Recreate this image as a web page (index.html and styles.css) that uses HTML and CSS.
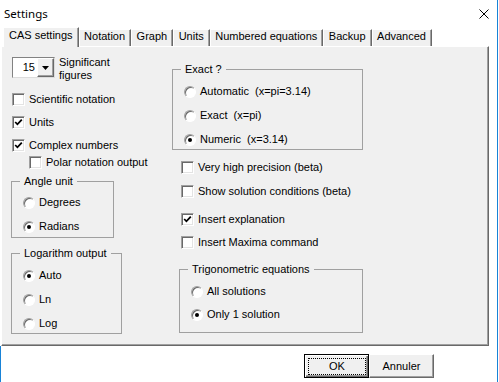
FILE: index.html
```html
<!DOCTYPE html>
<html lang="en">
<head>
  <meta charset="UTF-8">
  <title>Settings</title>
  <link rel="stylesheet" href="styles.css">
</head>
<body>
  <div class="window">
    <div class="titlebar">
      <span class="title">Settings</span>
      <svg class="close" width="10" height="10" viewBox="0 0 10 10">
        <path d="M0.5 0.5 L9.5 9.5 M9.5 0.5 L0.5 9.5" stroke="#000" stroke-width="1" fill="none"/>
      </svg>
    </div>

    <div class="tabs">
      <div class="tab tab-active">CAS settings</div>
      <div class="tab">Notation</div>
      <div class="tab">Graph</div>
      <div class="tab">Units</div>
      <div class="tab">Numbered equations</div>
      <div class="tab">Backup</div>
      <div class="tab">Advanced</div>
    </div>

    <div class="panel">
      <!-- left column -->
      <div class="col col-left">
        <div class="spin-row">
          <div class="spin">
            <span class="spin-value">15</span>
            <span class="spin-btn">
              <svg width="7" height="4" viewBox="0 0 7 4"><polygon points="0,0 7,0 3.5,4" fill="#000"/></svg>
            </span>
          </div>
          <div class="spin-label">Significant<br>figures</div>
        </div>

        <div class="check item-sci"><span class="box"></span>Scientific notation</div>
        <div class="check item-units"><span class="box"><svg width="9" height="9" viewBox="0 0 9 9"><polyline points="1.2,4 3.4,6.3 7.8,1.6" stroke="#000" stroke-width="1.8" fill="none"/></svg></span>Units</div>
        <div class="check item-complex"><span class="box"><svg width="9" height="9" viewBox="0 0 9 9"><polyline points="1.2,4 3.4,6.3 7.8,1.6" stroke="#000" stroke-width="1.8" fill="none"/></svg></span>Complex numbers</div>
        <div class="check item-polar"><span class="box"></span>Polar notation output</div>

        <fieldset class="group group-angle">
          <legend>Angle unit</legend>
          <div class="group-body">
            <div class="radio"><span class="dot"></span>Degrees</div>
            <div class="radio"><span class="dot on"></span>Radians</div>
          </div>
        </fieldset>

        <fieldset class="group group-log">
          <legend>Logarithm output</legend>
          <div class="group-body">
            <div class="radio"><span class="dot on"></span>Auto</div>
            <div class="radio"><span class="dot"></span>Ln</div>
            <div class="radio"><span class="dot"></span>Log</div>
          </div>
        </fieldset>
      </div>

      <!-- right column -->
      <div class="col col-right">
        <fieldset class="group group-exact">
          <legend>Exact ?</legend>
          <div class="group-body">
            <div class="radio"><span class="dot"></span>Automatic&nbsp; (x=pi=3.14)</div>
            <div class="radio"><span class="dot"></span>Exact&nbsp; (x=pi)</div>
            <div class="radio"><span class="dot on"></span>Numeric&nbsp; (x=3.14)</div>
          </div>
        </fieldset>

        <div class="check item-precision"><span class="box"></span>Very high precision (beta)</div>
        <div class="check item-conditions"><span class="box"></span>Show solution conditions (beta)</div>
        <div class="check item-explain"><span class="box"><svg width="9" height="9" viewBox="0 0 9 9"><polyline points="1.2,4 3.4,6.3 7.8,1.6" stroke="#000" stroke-width="1.8" fill="none"/></svg></span>Insert explanation</div>
        <div class="check item-maxima"><span class="box"></span>Insert Maxima command</div>

        <fieldset class="group group-trig">
          <legend>Trigonometric equations</legend>
          <div class="group-body">
            <div class="radio"><span class="dot"></span>All solutions</div>
            <div class="radio"><span class="dot on"></span>Only 1 solution</div>
          </div>
        </fieldset>
      </div>
    </div>

    <div class="footer">
      <button class="btn btn-default"><span class="focus">OK</span></button>
      <button class="btn">Annuler</button>
    </div>
  </div>
</body>
</html>
```

FILE: styles.css
```css
body {
  margin: 0;
  background: #fff;
  font-family: "Liberation Sans", Arial, sans-serif;
  font-size: 11px;
  color: #000;
}

.window {
  width: 497px;
  height: 382px;
  border-right: 1px solid #1883d7;
  display: flex;
  flex-direction: column;
}

/* title bar */
.titlebar {
  height: 27px;
  flex: none;
  display: flex;
  align-items: center;
  justify-content: space-between;
  padding: 0 8px 0 4px;
}

.title {
  font-family: "Noto Sans", "Liberation Sans", sans-serif;
  font-size: 11.5px;
}

/* tabs */
.tabs {
  height: 19px;
  flex: none;
  display: flex;
  align-items: flex-end;
  padding-left: 3px;
}

.tab {
  height: 17px;
  box-sizing: border-box;
  padding: 0 5px 0 4.5px;
  line-height: 13px;
  white-space: nowrap;
  background: #f0f0f0;
  border-top: 1px solid #fff;
  border-left: 1px solid #fff;
  border-right: 1px solid #696969;
  box-shadow: inset -1px 0 #a0a0a0;
}

.tab-active {
  height: 20px;
  margin-bottom: -1px;
  padding: 1px 5px 0;
  position: relative;
  z-index: 1;
}

/* panel */
.panel {
  margin-left: 1px;
  width: 488px;
  height: 300px;
  flex: none;
  box-sizing: border-box;
  display: flex;
  background: #f0f0f0;
  border-top: 1px solid #fff;
  border-left: 1px solid #fff;
  border-right: 1px solid #696969;
  border-bottom: 1px solid #696969;
  box-shadow: inset -1px -1px #a0a0a0;
}

.col {
  display: flex;
  flex-direction: column;
  align-items: flex-start;
}

.col-left {
  width: 170px;
  box-sizing: border-box;
  padding: 10px 0 0 9px;
}

.col-right {
  padding-top: 16px;
}

/* spinner */
.spin-row {
  display: flex;
  align-items: flex-start;
  margin-left: 1px;
}

.spin {
  width: 43px;
  height: 21px;
  box-sizing: border-box;
  display: flex;
  background: #fff;
  border: 1px solid;
  border-color: #828282 #dcdcdc #dcdcdc #828282;
}

.spin-value {
  flex: 1;
  text-align: right;
  padding-right: 2px;
  line-height: 19px;
}

.spin-btn {
  width: 17px;
  height: 19px;
  box-sizing: border-box;
  display: flex;
  align-items: center;
  justify-content: center;
  background: #f0f0f0;
  border: 1px solid;
  border-color: #fff #696969 #696969 #fff;
  box-shadow: inset -1px -1px #a0a0a0;
}

.spin-label {
  margin: -1px 0 0 4px;
  line-height: 13px;
}

/* checkboxes and radios */
.check,
.radio {
  height: 13px;
  line-height: 13px;
  display: flex;
  align-items: center;
  white-space: nowrap;
}

.box {
  width: 13px;
  height: 13px;
  box-sizing: border-box;
  margin-right: 4px;
  display: flex;
  align-items: center;
  justify-content: center;
  background: #fff;
  border: 1px solid;
  border-color: #a0a0a0 #fff #fff #a0a0a0;
  box-shadow: inset 1px 1px #696969, inset -1px -1px #e3e3e3;
}

.dot {
  width: 12px;
  height: 12px;
  box-sizing: border-box;
  margin-right: 4px;
  display: flex;
  align-items: center;
  justify-content: center;
  border-radius: 50%;
  background: #fff;
  border: 1px solid;
  border-color: #a0a0a0 #fff #fff #a0a0a0;
  box-shadow: inset 1px 1px #696969;
}

.dot.on::after {
  content: "";
  width: 4px;
  height: 4px;
  border-radius: 50%;
  background: #000;
}

.item-sci { margin: 11px 0 0 1px; }
.item-units { margin: 10px 0 0 1px; }
.item-complex { margin: 10px 0 0 1px; }
.item-polar { margin: 4px 0 0 18px; }

.item-precision { margin: 11px 0 0 9px; }
.item-conditions { margin: 11px 0 0 9px; }
.item-explain { margin: 15px 0 0 9px; }
.item-maxima { margin: 10px 0 0 9px; }

/* group boxes */
.group {
  margin: 0;
  padding: 0;
  min-width: 0;
  box-sizing: border-box;
  border: 1px solid #a0a0a0;
}

.group legend {
  margin-left: 8px;
  padding: 0 4px;
  line-height: 13px;
}

.group-body {
  display: flex;
  flex-direction: column;
  gap: 11px;
  padding: 8px 0 4px 11px;
}

.group-angle {
  width: 103px;
  margin-top: 6px;
}

.group-log {
  width: 111px;
  margin-top: 9px;
}

.group-log .group-body {
  padding: 9px 0 3px 11px;
}

.group-exact {
  width: 191px;
}

.group-exact .group-body {
  padding: 9px 0 3px 11px;
}

.group-trig {
  width: 184px;
  margin: 14px 0 0 7px;
}

.group-trig .group-body {
  gap: 10px;
  padding: 9px 0 11px 11px;
}

/* buttons */
.footer {
  flex: 1;
  display: flex;
  justify-content: flex-end;
  align-items: flex-start;
  padding: 8px 63px 0 0;
  border-left: 1px solid #1883d7;
}

.btn {
  width: 65px;
  height: 24px;
  box-sizing: border-box;
  padding: 0;
  font: inherit;
  color: #000;
  line-height: 22px;
  background: #f0f0f0;
  border: 1px solid;
  border-color: #fff #696969 #696969 #fff;
  box-shadow: inset -1px -1px #a0a0a0;
}

.btn-default {
  padding: 3px 2px 2px 3px;
  border-color: #000;
  box-shadow: inset 1px 1px #fff, inset -1px -1px #696969, inset -2px -2px #a0a0a0;
}

.focus {
  display: block;
  height: 100%;
  box-sizing: border-box;
  line-height: 14px;
  border: 1px dotted #000;
}
```
